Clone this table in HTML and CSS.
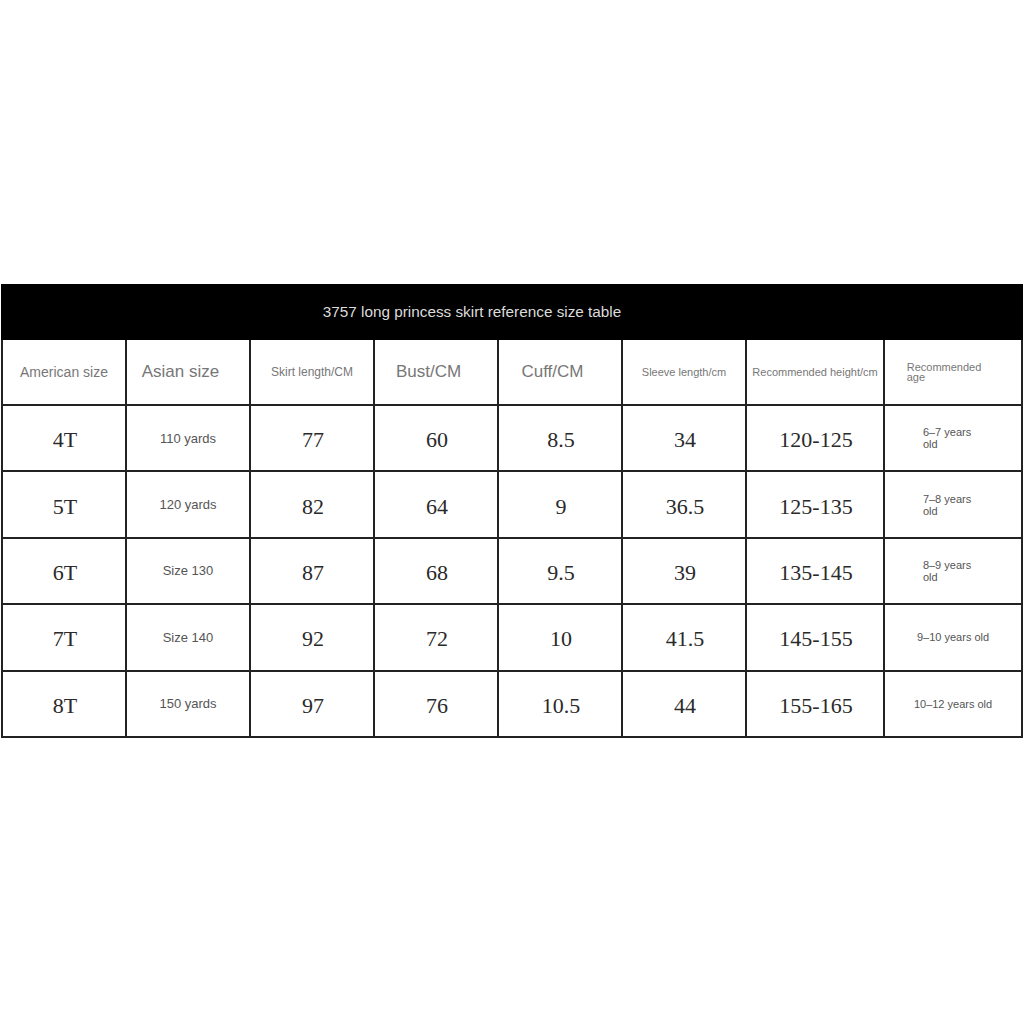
FILE: index.html
```html
<!DOCTYPE html>
<html>
<head>
<meta charset="utf-8">
<link rel="stylesheet" href="styles.css">
</head>
<body>
<div class="page">
<table class="size-table">
  <colgroup>
    <col class="c1"><col class="c2"><col class="c3"><col class="c4"><col class="c5"><col class="c6"><col class="c7"><col class="c8">
  </colgroup>
  <thead>
    <tr class="title-row"><th colspan="8"><span class="title">3757 long princess skirt reference size table</span></th></tr>
    <tr class="head-row">
      <th class="h-md">American size</th>
      <th class="h-lg">Asian size</th>
      <th class="h-sm">Skirt length/CM</th>
      <th class="h-lg">Bust/CM</th>
      <th class="h-lg">Cuff/CM</th>
      <th class="h-xs">Sleeve length/cm</th>
      <th class="h-xs">Recommended height/cm</th>
      <th class="h-xs"><span class="stack">Recommended<br>age</span></th>
    </tr>
  </thead>
  <tbody>
    <tr>
      <td class="num">4T</td><td class="sans">110 yards</td><td class="num">77</td><td class="num">60</td><td class="num">8.5</td><td class="num">34</td><td class="num">120-125</td><td class="age"><span class="stack">6–7 years<br>old</span></td>
    </tr>
    <tr>
      <td class="num">5T</td><td class="sans">120 yards</td><td class="num">82</td><td class="num">64</td><td class="num">9</td><td class="num">36.5</td><td class="num">125-135</td><td class="age"><span class="stack">7–8 years<br>old</span></td>
    </tr>
    <tr>
      <td class="num">6T</td><td class="sans">Size 130</td><td class="num">87</td><td class="num">68</td><td class="num">9.5</td><td class="num">39</td><td class="num">135-145</td><td class="age"><span class="stack">8–9 years<br>old</span></td>
    </tr>
    <tr>
      <td class="num">7T</td><td class="sans">Size 140</td><td class="num">92</td><td class="num">72</td><td class="num">10</td><td class="num">41.5</td><td class="num">145-155</td><td class="age">9–10 years old</td>
    </tr>
    <tr>
      <td class="num">8T</td><td class="sans">150 yards</td><td class="num">97</td><td class="num">76</td><td class="num">10.5</td><td class="num">44</td><td class="num">155-165</td><td class="age">10–12 years old</td>
    </tr>
  </tbody>
</table>
</div>
</body>
</html>
```
FILE: styles.css
```css
html, body {
  margin: 0;
  padding: 0;
  background: #fff;
}
.page {
  width: 1024px;
  height: 1024px;
  padding-top: 284px;
  padding-left: 1px;
  box-sizing: border-box;
}
.size-table {
  border-collapse: collapse;
  table-layout: fixed;
  width: 1022px;
  border: 2px solid #111;
}
.c1, .c2, .c3, .c4, .c5, .c6 { width: 124px; }
.c7, .c8 { width: 138px; }
.size-table th, .size-table td {
  border: 2px solid #222;
  padding: 0;
  text-align: center;
  vertical-align: middle;
}
.title-row th {
  background: #000;
  height: 52px;
  border-color: #000;
}
.title {
  display: inline-block;
  margin-right: 80px;
  color: #dcdcdc;
  font-family: "Liberation Sans", Arial, sans-serif;
  font-size: 15.3px;
  font-weight: normal;
}
.head-row th {
  height: 64px;
  font-family: "Liberation Sans", Arial, sans-serif;
  font-weight: normal;
  color: #777;
}
.head-row th.h-lg { font-size: 17px; padding-right: 15px; }
.head-row th.h-md { font-size: 14px; }
.head-row th.h-sm { font-size: 12px; }
.head-row th.h-xs { font-size: 11px; }
.stack {
  display: inline-block;
  text-align: left;
  line-height: 10px;
}
.size-table tbody td {
  height: 64.4px;
}
.size-table tbody td.num {
  height: 60.4px;
  font-family: "Liberation Serif", "Times New Roman", serif;
  font-size: 22px;
  color: #2a2a2a;
  padding-top: 4px;
  padding-left: 2px;
}
.size-table td.sans {
  font-family: "Liberation Sans", Arial, sans-serif;
  font-size: 13px;
  color: #555;
}
.size-table td.age {
  font-family: "Liberation Sans", Arial, sans-serif;
  font-size: 11px;
  color: #555;
}
.age .stack {
  line-height: 12px;
  margin-right: 12px;
}
.head-row .stack {
  margin-right: 18px;
}
```
